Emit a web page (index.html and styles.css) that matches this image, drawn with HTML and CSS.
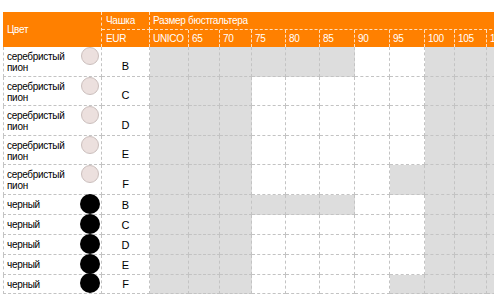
FILE: index.html
```html
<!DOCTYPE html>
<html lang="ru">
<head>
<meta charset="utf-8">
<title>Размеры</title>
<link rel="stylesheet" href="styles.css">
</head>
<body>
<div class="sheet">
  <div class="grid">
    <div class="h h-color">Цвет</div>
    <div class="h h-top h-cup">Чашка</div>
    <div class="h h-top h-size">Размер бюстгальтера</div>
    <div class="h h-cup">EUR</div>
    <div class="h">UNICO</div>
    <div class="h">65</div>
    <div class="h">70</div>
    <div class="h">75</div>
    <div class="h">80</div>
    <div class="h">85</div>
    <div class="h">90</div>
    <div class="h">95</div>
    <div class="h">100</div>
    <div class="h">105</div>
    <div class="h">110</div>

    <!-- silver B -->
    <div class="c name silver"><span class="label">серебристый<br>пион</span><span class="dot dot-silver"></span></div>
    <div class="c cup silver">B</div>
    <div class="c g"></div><div class="c g"></div><div class="c g"></div><div class="c g"></div><div class="c g"></div><div class="c g"></div><div class="c"></div><div class="c"></div><div class="c g"></div><div class="c g"></div><div class="c g"></div>
    <!-- silver C -->
    <div class="c name silver"><span class="label">серебристый<br>пион</span><span class="dot dot-silver"></span></div>
    <div class="c cup silver">C</div>
    <div class="c g"></div><div class="c g"></div><div class="c g"></div><div class="c"></div><div class="c"></div><div class="c"></div><div class="c"></div><div class="c"></div><div class="c g"></div><div class="c g"></div><div class="c g"></div>
    <!-- silver D -->
    <div class="c name silver"><span class="label">серебристый<br>пион</span><span class="dot dot-silver"></span></div>
    <div class="c cup silver">D</div>
    <div class="c g"></div><div class="c g"></div><div class="c g"></div><div class="c"></div><div class="c"></div><div class="c"></div><div class="c"></div><div class="c"></div><div class="c g"></div><div class="c g"></div><div class="c g"></div>
    <!-- silver E -->
    <div class="c name silver"><span class="label">серебристый<br>пион</span><span class="dot dot-silver"></span></div>
    <div class="c cup silver">E</div>
    <div class="c g"></div><div class="c g"></div><div class="c g"></div><div class="c"></div><div class="c"></div><div class="c"></div><div class="c"></div><div class="c"></div><div class="c g"></div><div class="c g"></div><div class="c g"></div>
    <!-- silver F -->
    <div class="c name silver"><span class="label">серебристый<br>пион</span><span class="dot dot-silver"></span></div>
    <div class="c cup silver">F</div>
    <div class="c g"></div><div class="c g"></div><div class="c g"></div><div class="c"></div><div class="c"></div><div class="c"></div><div class="c"></div><div class="c g"></div><div class="c g"></div><div class="c g"></div><div class="c g"></div>

    <!-- black B -->
    <div class="c name black"><span class="label">черный</span><span class="dot dot-black"></span></div>
    <div class="c cup">B</div>
    <div class="c g"></div><div class="c g"></div><div class="c g"></div><div class="c g"></div><div class="c g"></div><div class="c g"></div><div class="c"></div><div class="c"></div><div class="c g"></div><div class="c g"></div><div class="c g"></div>
    <!-- black C -->
    <div class="c name black"><span class="label">черный</span><span class="dot dot-black"></span></div>
    <div class="c cup">C</div>
    <div class="c g"></div><div class="c g"></div><div class="c g"></div><div class="c"></div><div class="c"></div><div class="c"></div><div class="c"></div><div class="c"></div><div class="c g"></div><div class="c g"></div><div class="c g"></div>
    <!-- black D -->
    <div class="c name black"><span class="label">черный</span><span class="dot dot-black"></span></div>
    <div class="c cup">D</div>
    <div class="c g"></div><div class="c g"></div><div class="c g"></div><div class="c"></div><div class="c"></div><div class="c"></div><div class="c"></div><div class="c"></div><div class="c g"></div><div class="c g"></div><div class="c g"></div>
    <!-- black E -->
    <div class="c name black"><span class="label">черный</span><span class="dot dot-black"></span></div>
    <div class="c cup">E</div>
    <div class="c g"></div><div class="c g"></div><div class="c g"></div><div class="c"></div><div class="c"></div><div class="c"></div><div class="c"></div><div class="c"></div><div class="c g"></div><div class="c g"></div><div class="c g"></div>
    <!-- black F -->
    <div class="c name black"><span class="label">черный</span><span class="dot dot-black"></span></div>
    <div class="c cup">F</div>
    <div class="c g"></div><div class="c g"></div><div class="c g"></div><div class="c"></div><div class="c"></div><div class="c"></div><div class="c"></div><div class="c g"></div><div class="c g"></div><div class="c g"></div><div class="c g"></div>
  </div>
</div>
</body>
</html>
```

FILE: styles.css
```css
html, body {
  margin: 0;
  padding: 0;
  overflow: hidden;
  background: #ffffff;
}

body {
  font-family: "Liberation Sans", Arial, sans-serif;
  font-size: 10px;
  letter-spacing: -0.3px;
  color: #000000;
}

.sheet {
  padding: 12px 0 0 3px;
}

.grid {
  display: grid;
  width: max-content;
  grid-template-columns: 99px 48px 39px 31px 32px 34px 34px 35px 35px 35px 30px 32px 40px;
  grid-template-rows: 18px 17px 30px 29px 30px 29px 30px 20px 20px 20px 20px 19px;
}

.grid > div {
  box-sizing: border-box;
}

/* header */
.h {
  background: #ff8000;
  color: #ffffff;
  display: flex;
  align-items: center;
  padding-left: 3px;
  border-right: 1px dashed rgba(255, 255, 255, 0.75);
  white-space: nowrap;
}

.h-color {
  grid-row: span 2;
  border-left: 1px solid transparent;
}

.h-top {
  border-bottom: 1px dashed rgba(255, 255, 255, 0.75);
}

.h-cup {
  padding-left: 4px;
}

.h-size {
  grid-column: span 11;
}

/* body cells */
.c {
  border-right: 1px dashed #c3c3c3;
  border-bottom: 1px dashed #c3c3c3;
}

.g {
  background: #dddddd;
}

.name {
  border-left: 1px dashed #c3c3c3;
  display: flex;
  justify-content: space-between;
  padding-left: 3px;
  padding-right: 2px;
}

.name.silver {
  align-items: flex-start;
}

.name.silver .label {
  padding-top: 4px;
  line-height: 11px;
}

.name.black {
  align-items: center;
  padding-right: 1px;
}

.dot {
  flex: none;
  border-radius: 50%;
  box-sizing: border-box;
}

.dot-silver {
  width: 18px;
  height: 18px;
  background: #ece0de;
  border: 1px solid #cbbfbd;
}

.dot-black {
  width: 20px;
  height: 20px;
  margin-top: -2px;
  background: #000000;
}

.cup {
  display: flex;
  justify-content: center;
  align-items: center;
  font-size: 11px;
  letter-spacing: 0;
}

.cup.silver {
  padding-top: 8px;
}
```
